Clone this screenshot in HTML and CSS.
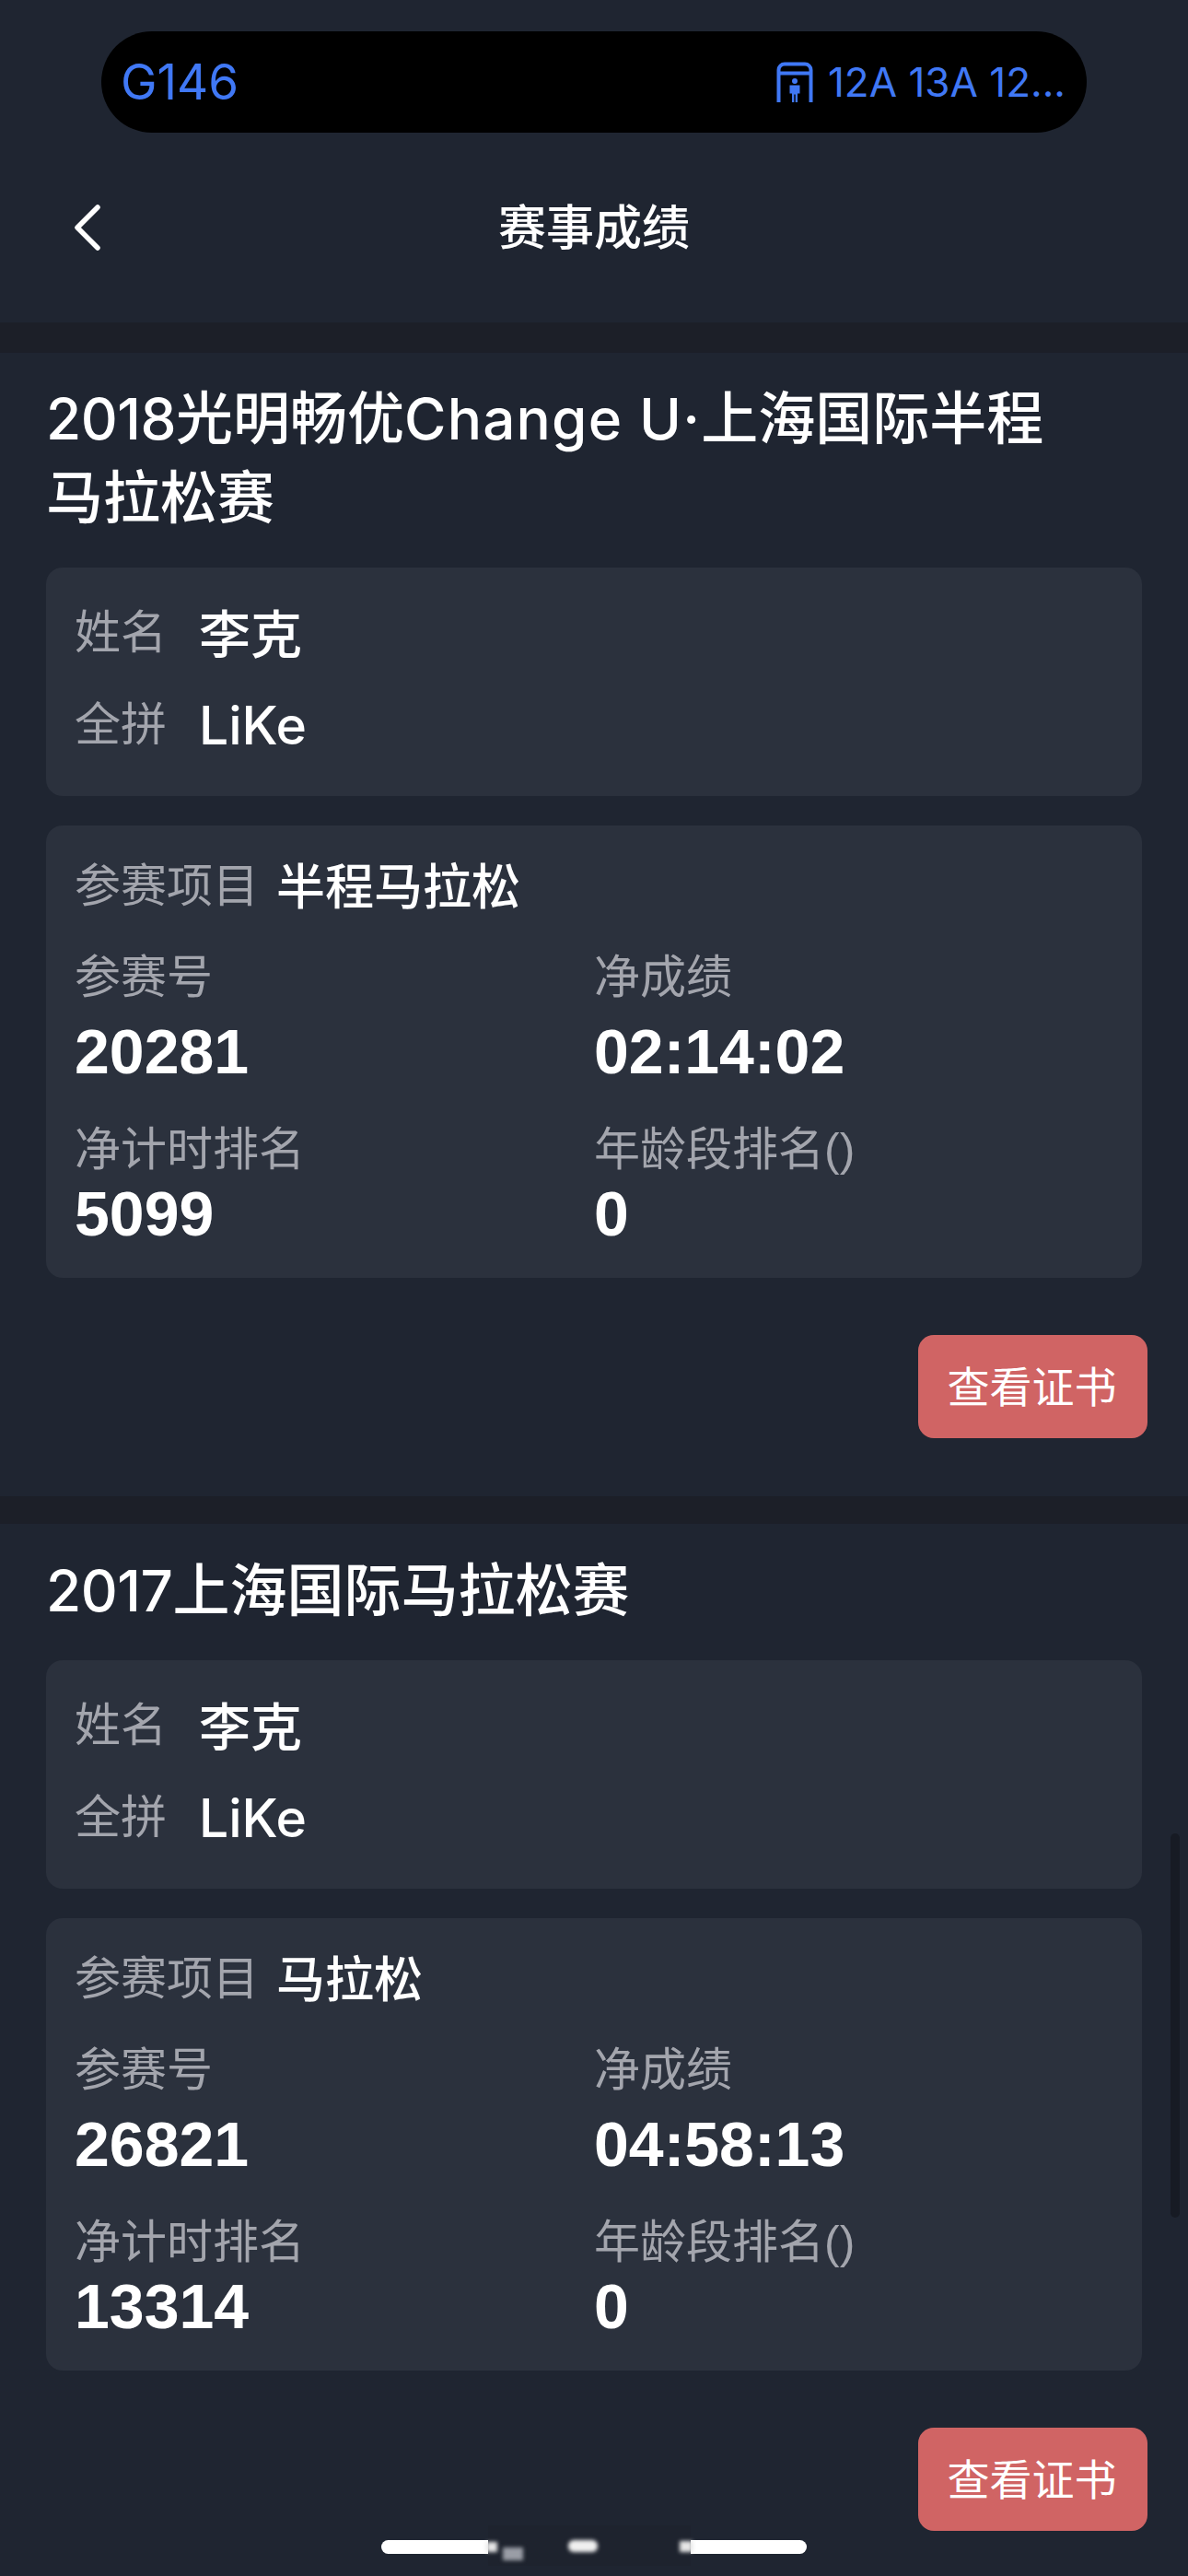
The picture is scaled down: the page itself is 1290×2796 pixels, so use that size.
FILE: index.html
```html
<!DOCTYPE html>
<html lang="zh-CN">
<head>
  <meta charset="UTF-8">
  <meta name="viewport" content="width=device-width, initial-scale=1.0">
  <title>赛事成绩</title>
  <link rel="stylesheet" href="styles.css">
</head>
<body>
  <div class="page">
    <div class="top">
      <div class="pill">
        <span class="train">G146</span>
        <span class="gate">
          <svg class="gate-icon" viewBox="0 0 40 44" width="40" height="44">
            <path d="M2.500 44V9a6.500 6.500 0 0 1 6.500-6.500h22a6.500 6.500 0 0 1 6.500 6.500v35M2.500 12.500h35" fill="none" stroke="#4078f5" stroke-width="4"/>
            <circle cx="20" cy="21" r="3" fill="#4078f5"/>
            <path d="M14.500 25.500h11v9h-2.500V44h-2.300v-8.500h-1.400V44h-2.300v-9.500h-2.500z" fill="#4078f5"/>
          </svg>
          12A 13A 12...
        </span>
      </div>
      <div class="nav">
        <svg class="back" viewBox="0 0 32 50" width="32" height="50">
          <path d="M26 3L4 25l22 22" fill="none" stroke="#fff" stroke-width="5.500" stroke-linecap="round" stroke-linejoin="round"/>
        </svg>
        <h1>赛事成绩</h1>
      </div>
    </div>

    <!-- 2018 -->
    <section class="race">
      <h2><span class="digits">2018</span>光明畅优<span class="latin">Change U·</span>上海国际半程<br>马拉松赛</h2>
      <div class="box person">
        <div class="person-row"><span class="label">姓名</span><span class="name">李克</span></div>
        <div class="person-row"><span class="label">全拼</span><span class="pinyin">LiKe</span></div>
      </div>
      <div class="box result">
        <div class="event"><span class="label">参赛项目</span><span class="event-name">半程马拉松</span></div>
        <div class="stat-row stat-row-top">
          <div><div class="label">参赛号</div><div class="stat-value">20281</div></div>
          <div><div class="label">净成绩</div><div class="stat-value">02:14:02</div></div>
        </div>
        <div class="stat-row">
          <div><div class="label">净计时排名</div><div class="stat-value">5099</div></div>
          <div><div class="label">年龄段排名()</div><div class="stat-value">0</div></div>
        </div>
      </div>
      <div class="actions"><button class="cert-btn">查看证书</button></div>
    </section>

    <!-- 2017 -->
    <section class="race">
      <h2><span class="digits">2017</span>上海国际马拉松赛</h2>
      <div class="box person">
        <div class="person-row"><span class="label">姓名</span><span class="name">李克</span></div>
        <div class="person-row"><span class="label">全拼</span><span class="pinyin">LiKe</span></div>
      </div>
      <div class="box result">
        <div class="event"><span class="label">参赛项目</span><span class="event-name">马拉松</span></div>
        <div class="stat-row stat-row-top">
          <div><div class="label">参赛号</div><div class="stat-value">26821</div></div>
          <div><div class="label">净成绩</div><div class="stat-value">04:58:13</div></div>
        </div>
        <div class="stat-row">
          <div><div class="label">净计时排名</div><div class="stat-value">13314</div></div>
          <div><div class="label">年龄段排名()</div><div class="stat-value">0</div></div>
        </div>
      </div>
      <div class="actions"><button class="cert-btn">查看证书</button></div>
    </section>

    <div class="scrollbar"></div>
    <div class="home-bar">
      <div class="smudge">
        <span class="blob blob-a"></span>
        <span class="blob blob-b"></span>
        <span class="blob blob-c"></span>
        <span class="blob blob-d"></span>
      </div>
    </div>
  </div>
</body>
</html>
```

FILE: styles.css
```css
* {
  box-sizing: border-box;
}
html, body {
  margin: 0;
  padding: 0;
}
body {
  background-color: #1f2531;
  color: #fff;
  font-family: "Liberation Sans", "Noto Sans CJK SC", sans-serif;
}
.page {
  position: relative;
  width: 1290px;
  height: 2796px;
  overflow: hidden;
}
.top {
  height: 350px;
  padding-top: 34px;
}
.pill {
  display: flex;
  justify-content: space-between;
  align-items: center;
  width: 1070px;
  height: 110px;
  margin: 0 auto;
  padding: 0 23px 0 21px;
  background: #000;
  border-radius: 55px;
  color: #4078f5;
  font-family: Inter, "Noto Sans CJK SC", sans-serif;
}
.train {
  font-size: 53px;
}
.gate {
  display: flex;
  align-items: center;
  gap: 16px;
  font-size: 44px;
}
.nav {
  position: relative;
  display: flex;
  justify-content: center;
  align-items: center;
  height: 100px;
  margin-top: 53px;
}
.back {
  position: absolute;
  left: 80px;
  top: 25px;
}
h1 {
  margin: 0 0 7px;
  font-size: 52px;
  font-weight: 500;
  font-family: "Noto Sans CJK SC", sans-serif;
}
.race {
  padding: 29px 44px 63px 50px;
  border-top: 33px solid #1c1f28;
}
.race + .race {
  padding-top: 30px;
  border-top-width: 30px;
}
h2 {
  margin: 0 0 32px;
  font-family: Inter, "Noto Sans CJK SC", sans-serif;
  font-size: 62px;
  font-weight: 500;
  line-height: 86px;
}
.digits {
  letter-spacing: -0.500px;
}
.latin {
  letter-spacing: 1.200px;
}
.box {
  width: 1190px;
  background: #2b313d;
  border-radius: 18px;
  padding-left: 31px;
}
.person {
  height: 248px;
  padding-top: 21px;
}
.person-row {
  display: flex;
  align-items: center;
  gap: 35px;
  height: 100px;
}
.label {
  color: #a3a5ad;
  font-size: 50px;
  line-height: 66px;
}
.name {
  padding-bottom: 6px;
  font-size: 56px;
  font-weight: 500;
  font-family: "Noto Sans CJK SC", sans-serif;
}
.pinyin {
  font-family: Inter, sans-serif;
  font-size: 57px;
  font-weight: 500;
}
.result {
  margin-top: 32px;
  padding-top: 33px;
  padding-bottom: 30px;
}
.event {
  display: flex;
  align-items: center;
  gap: 19px;
  height: 66px;
}
.event-name {
  padding-bottom: 6px;
  font-size: 53px;
  font-weight: 500;
  font-family: "Noto Sans CJK SC", sans-serif;
  line-height: 66px;
}
.stat-row {
  display: grid;
  grid-template-columns: 564px 1fr;
  margin-top: 34px;
}
.stat-row-top {
  margin-top: 33px;
}
.stat-value {
  margin-top: -4px;
  font-size: 68px;
  font-weight: 700;
  line-height: 80px;
}
.stat-row-top .stat-value {
  margin-top: 7px;
}
.actions {
  display: flex;
  justify-content: flex-end;
  margin-top: 62px;
}
.cert-btn {
  width: 249px;
  height: 112px;
  padding: 0 2px 7px 0;
  background-color: #d06464;
  border: none;
  border-radius: 17px;
  color: #fff;
  font-family: "Noto Sans CJK SC", sans-serif;
  font-size: 46px;
}
.scrollbar {
  position: absolute;
  left: 1271px;
  top: 1990px;
  width: 10px;
  height: 417px;
  background: #171b24;
  border-radius: 5px;
}
.home-bar {
  position: absolute;
  left: 414px;
  top: 2757px;
  width: 462px;
  height: 15px;
  background: #fff;
  border-radius: 8px;
}
.smudge {
  position: absolute;
  left: 116px;
  top: -16px;
  width: 220px;
  height: 44px;
  background: #1e232e;
}
.blob {
  position: absolute;
  filter: blur(2px);
}
.blob-a {
  left: 16px;
  top: 24px;
  width: 22px;
  height: 14px;
  background: #9a9da6;
}
.blob-b {
  left: 87px;
  top: 16px;
  width: 32px;
  height: 13px;
  background: #f0f0f0;
  border-radius: 6px;
}
.blob-c {
  left: -2px;
  top: 18px;
  width: 12px;
  height: 11px;
  background: #e6e6e6;
}
.blob-d {
  left: 208px;
  top: 17px;
  width: 14px;
  height: 12px;
  background: #e6e6e6;
}
```
